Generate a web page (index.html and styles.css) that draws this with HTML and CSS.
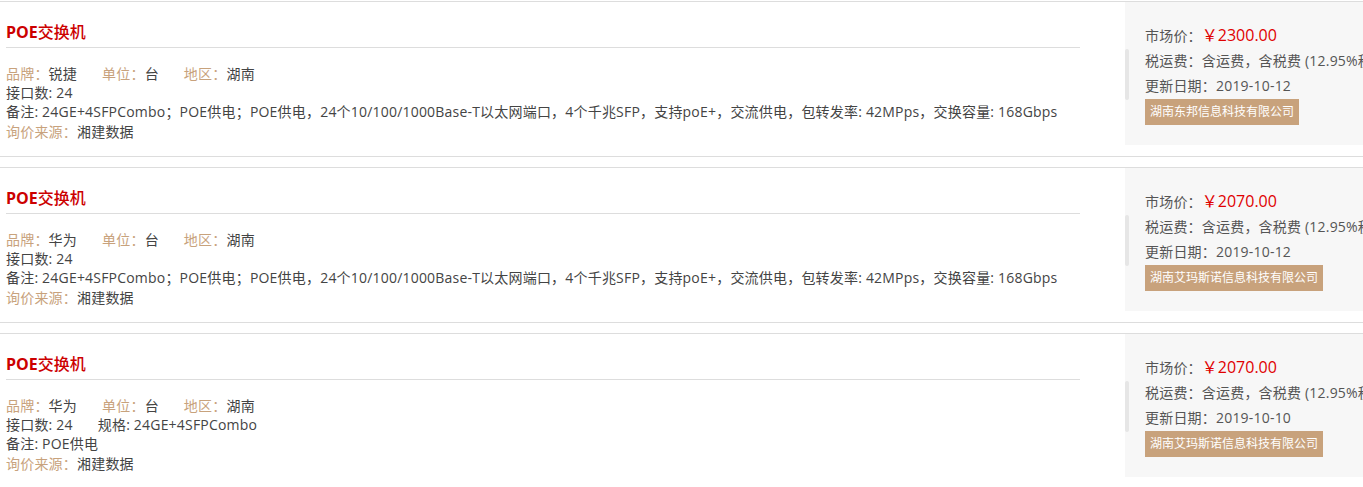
FILE: index.html
```html
<!DOCTYPE html>
<html lang="zh-CN">
<head>
    <meta charset="UTF-8">
    <meta name="viewport" content="width=device-width, initial-scale=1.0">
    <title>询价列表</title>
    <link rel="stylesheet" href="styles.css">
</head>
<body>

<div class="list">
    <div class="item">
        <div class="item-main">
            <h3 class="title">POE<span class="title-cn">交换机</span></h3>
            <div class="info">
                <p><span class="field"><em>品牌：</em>锐捷</span><span class="field"><em>单位：</em>台</span><span class="field"><em>地区：</em>湖南</span></p>
                <p><span class="field">接口数: 24</span></p>
                <p>备注: 24GE+4SFPCombo；POE供电；POE供电，24个10/100/1000Base-T以太网端口，4个千兆SFP，支持poE+，交流供电，包转发率: 42MPps，交换容量: 168Gbps</p>
                <p class="source"><em>询价来源：</em>湘建数据</p>
            </div>
        </div>
        <div class="item-side">
            <p>市场价：<span class="price">￥2300.00</span></p>
            <p>税运费：含运费，含税费 (12.95%税点)</p>
            <p>更新日期：2019-10-12</p>
            <span class="company">湖南东邦信息科技有限公司</span>
        </div>
    </div>

    <div class="item">
        <div class="item-main">
            <h3 class="title">POE<span class="title-cn">交换机</span></h3>
            <div class="info">
                <p><span class="field"><em>品牌：</em>华为</span><span class="field"><em>单位：</em>台</span><span class="field"><em>地区：</em>湖南</span></p>
                <p><span class="field">接口数: 24</span></p>
                <p>备注: 24GE+4SFPCombo；POE供电；POE供电，24个10/100/1000Base-T以太网端口，4个千兆SFP，支持poE+，交流供电，包转发率: 42MPps，交换容量: 168Gbps</p>
                <p class="source"><em>询价来源：</em>湘建数据</p>
            </div>
        </div>
        <div class="item-side">
            <p>市场价：<span class="price">￥2070.00</span></p>
            <p>税运费：含运费，含税费 (12.95%税点)</p>
            <p>更新日期：2019-10-12</p>
            <span class="company">湖南艾玛斯诺信息科技有限公司</span>
        </div>
    </div>

    <div class="item">
        <div class="item-main">
            <h3 class="title">POE<span class="title-cn">交换机</span></h3>
            <div class="info">
                <p><span class="field"><em>品牌：</em>华为</span><span class="field"><em>单位：</em>台</span><span class="field"><em>地区：</em>湖南</span></p>
                <p><span class="field">接口数: 24</span><span class="field">规格: 24GE+4SFPCombo</span></p>
                <p>备注: POE供电</p>
                <p class="source"><em>询价来源：</em>湘建数据</p>
            </div>
        </div>
        <div class="item-side">
            <p>市场价：<span class="price">￥2070.00</span></p>
            <p>税运费：含运费，含税费 (12.95%税点)</p>
            <p>更新日期：2019-10-10</p>
            <span class="company">湖南艾玛斯诺信息科技有限公司</span>
        </div>
    </div>
</div>

</body>
</html>
```

FILE: styles.css
```css
html, body {
    overflow: hidden;
}
body {
    margin: 0;
    font-family: "Open Sans", "Noto Sans CJK SC", sans-serif;
    font-size: 14px;
    letter-spacing: 0.2px;
    color: #444;
    background-color: #fff;
}
p {
    margin: 0;
}
em {
    font-style: normal;
    color: #c8a27c;
}
.list {
    width: 1480px;
    padding-top: 1px;
}
.item {
    display: flex;
    height: 154px;
    border-top: 1px solid #ddd;
    border-bottom: 1px solid #ddd;
    margin-bottom: 10px;
}
.item-main {
    flex-shrink: 0;
    width: 1074px;
    margin-left: 6px;
}
.title {
    margin: 0;
    padding-top: 19px;
    height: 26px;
    line-height: 22px;
    font-size: 16px;
    font-weight: bold;
    letter-spacing: 0;
    color: #cc0000;
    border-bottom: 1px solid #ddd;
}
.title-cn {
    font-weight: 500;
}
.info {
    padding-top: 16px;
    line-height: 19px;
}
.field {
    margin-right: 25px;
}
.source {
    margin-top: 1px;
}
.item-side {
    flex-shrink: 0;
    position: relative;
    width: 320px;
    height: 143px;
    margin-left: 45px;
    padding: 21px 0 0 20px;
    box-sizing: border-box;
    background-color: #f7f7f7;
    color: #555;
    line-height: 25px;
    white-space: nowrap;
}
.item-side::before {
    content: "";
    position: absolute;
    left: 0;
    top: 47px;
    width: 4px;
    height: 51px;
    border-radius: 2px;
    background-color: #e6e6e6;
}
.price {
    font-size: 16px;
    letter-spacing: 0;
    color: #e00000;
}
.company {
    display: inline-block;
    margin-top: 1px;
    padding: 0 5px;
    height: 26px;
    line-height: 26px;
    font-size: 12px;
    letter-spacing: 0;
    color: #fff;
    background-color: #c8a27c;
}
```
